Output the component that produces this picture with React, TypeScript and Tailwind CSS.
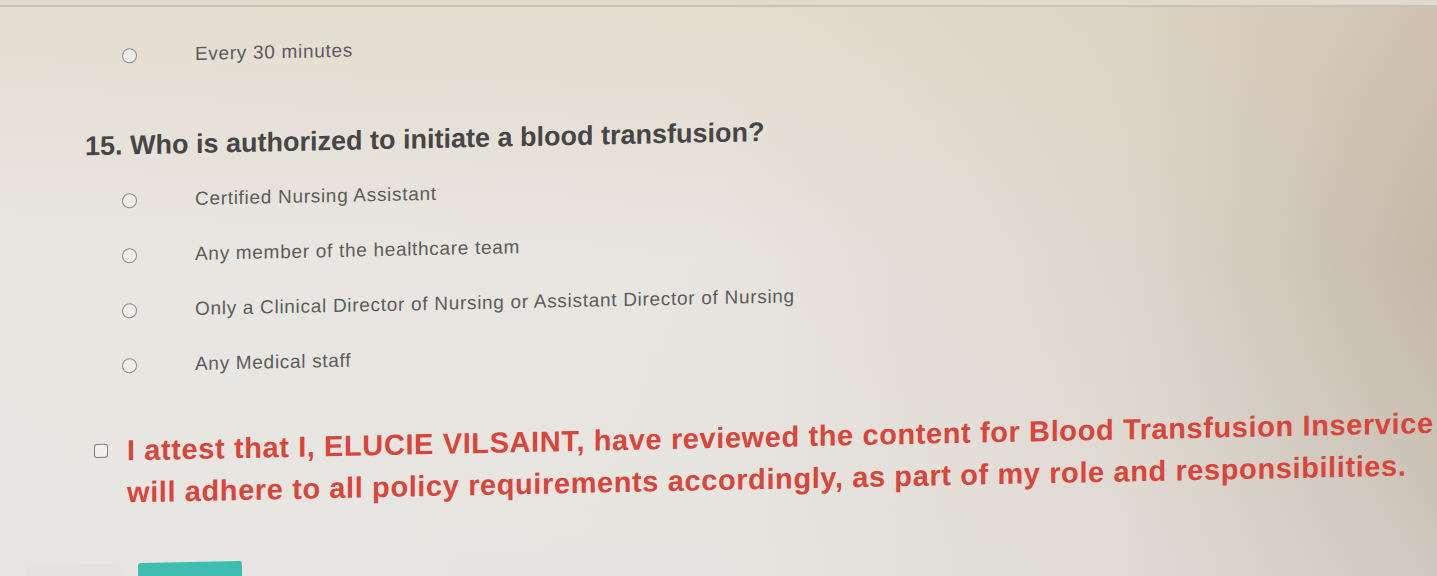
import React from 'react'

const options = [
  'Certified Nursing Assistant',
  'Any member of the healthcare team',
  'Only a Clinical Director of Nursing or Assistant Director of Nursing',
  'Any Medical staff',
]

function Option({ label }: { label: string }) {
  return (
    <label className="flex items-center h-[55px] pl-[122px]">
      <span className="w-[15px] h-[15px] rounded-full border-[1.5px] border-[#8d8d8b] bg-[#efedea] shrink-0" />
      <span className="ml-[58px] text-[19px] text-[#5c5c5c] tracking-[0.7px]">{label}</span>
    </label>
  )
}

export default function App() {
  return (
    <div className="w-[1437px] h-[576px] overflow-hidden relative font-['Liberation_Sans',Arial,sans-serif] bg-[linear-gradient(90deg,#e9e7e2_0%,#e8e5df_50%,#ded7cd_78%,#c4b8a9_100%)]">
      {/* warm tint of the photo, stronger at the top */}
      <div className="absolute inset-0 bg-[linear-gradient(180deg,rgba(222,208,186,0.45)_0%,rgba(222,208,186,0)_45%,rgba(228,228,228,0.35)_100%)]" />
      <div className="absolute inset-x-0 top-0 h-[7px] bg-[#e0d9cc] border-b-[2px] border-[#c8c2b7]" />

      {/* photo is taken at a slight angle: skew keeps the left edges upright */}
      <div className="relative -skew-y-[1.2deg] origin-[0_0]">
        <div className="h-[31px]" />
        <Option label="Every 30 minutes" />

        <h2 className="mt-[42px] pl-[85px] text-[27px] font-bold text-[#464646] leading-[40px]">
          15. Who is authorized to initiate a blood transfusion?
        </h2>

        <div className="mt-[8px]">
          {options.map((o) => (
            <Option key={o} label={o} />
          ))}
        </div>

        <div className="mt-[36px] flex items-start pl-[94px]">
          <span className="mt-[14px] w-[14px] h-[14px] rounded-[3px] border-[1.5px] border-[#7b7b79] bg-[#f1f0ed] shrink-0" />
          <p className="ml-[19px] text-[29px] font-bold text-[#d9453a] leading-[42px] whitespace-nowrap tracking-[0.6px]">
            I attest that I, ELUCIE VILSAINT, have reviewed the content for Blood Transfusion Inservice and
            <br />
            will adhere to all policy requirements accordingly, as part of my role and responsibilities.
          </p>
        </div>

        <div className="mt-[50px] flex gap-[17px] pl-[25px]">
          <button className="w-[96px] h-[40px] rounded-[3px] bg-[#e4e3e1]" />
          <button className="w-[104px] h-[40px] rounded-[3px] bg-[#3fbdb1]" />
        </div>
      </div>
    </div>
  )
}
